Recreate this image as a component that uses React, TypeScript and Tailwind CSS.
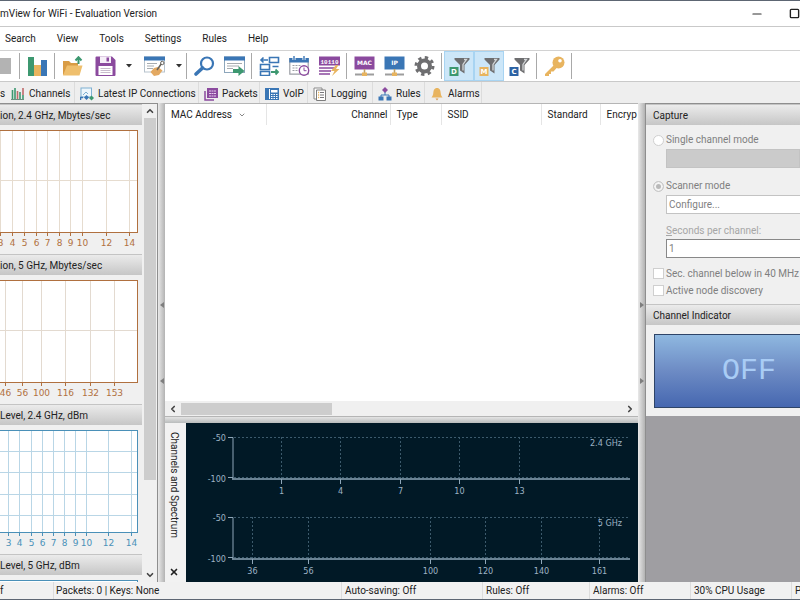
import React from 'react';
import clsx from 'clsx';
import { ChevronUp, ChevronDown, ChevronLeft, ChevronRight, Minus, Square, X } from 'lucide-react';

const BLUE = '#3a76b5';
const PURPLE = '#8b4a9e';
const GREEN = '#3d9870';
const SAND = '#e8b45f';
const GRAY = '#6e6e70';

/* ---------- toolbar icons ---------- */

const Icon: React.FC<{ children: React.ReactNode }> = ({ children }) => (
  <svg width="21" height="20" viewBox="0 0 21 20" fill="none" className="shrink-0">
    {children}
  </svg>
);

const BarsIcon = () => (
  <Icon>
    <rect x="1" y="1" width="6" height="19" fill={GREEN} />
    <rect x="7" y="9" width="7" height="11" fill={SAND} />
    <rect x="14" y="4" width="6" height="16" fill={BLUE} />
  </Icon>
);

const OpenIcon = () => (
  <Icon>
    <path d="M1 19V5h6l2 2h7v3" fill="#d99c45" />
    <path d="M1 19.500 5 9.500h15.500L17.500 19.500z" fill="#efbf6d" />
    <path d="M16.500 8V2M13.500 4.500l3-3.300 3 3.300" stroke={GREEN} strokeWidth="2" />
  </Icon>
);

const SaveIcon = () => (
  <Icon>
    <path d="M.5 1.500A1 1 0 0 1 1.500.5H17l3.500 3.500v15a1 1 0 0 1-1 1h-18a1 1 0 0 1-1-1z" fill={PURPLE} />
    <rect x="5" y=".5" width="11" height="6.500" fill="#f6eff8" />
    <rect x="11.500" y="1.500" width="2.500" height="4" fill={PURPLE} />
    <rect x="3.500" y="10" width="14" height="9" fill="#fff" />
    <path d="M5.500 12.500h10M5.500 14.500h10M5.500 16.500h10" stroke="#c9bccd" />
  </Icon>
);

const ProfileIcon = () => (
  <Icon>
    <rect x=".5" y="1" width="20" height="15" fill="#fff" stroke="#b7c3cd" />
    <rect width="21" height="4" y=".5" fill={BLUE} />
    <path d="M3 7.500h10M3 10h7M3 12.500h6" stroke="#a7acb0" />
    <path d="m6.500 16 3.500-4 4-1 4.500 3.500-3.500 4.500-5 1z" fill="#e3a962" />
    <path d="m13 14 4.500-6.500" stroke="#66625c" strokeWidth="1.500" />
    <circle cx="18.300" cy="7" r="1.700" fill="#fff" stroke="#66625c" />
  </Icon>
);

const FindIcon = () => (
  <Icon>
    <circle cx="13" cy="7.500" r="6" stroke={BLUE} strokeWidth="2.200" />
    <path d="m8.500 12-6.500 6" stroke={BLUE} strokeWidth="3.600" strokeLinecap="round" />
  </Icon>
);

const GotoIcon = () => (
  <Icon>
    <rect x=".5" y="1" width="20" height="15.500" fill="#fff" stroke="#8da6bb" />
    <rect y=".5" width="21" height="4" fill={BLUE} />
    <path d="M3 7.500h15M3 10h12M3 12.500h6" stroke="#a7acb0" />
    <path d="M9 13h5.500v-3l6 5-6 5v-3H9z" fill={GREEN} />
  </Icon>
);

const ReconstructIcon = () => (
  <Icon>
    <path d="M10.500 1.500h9v5h-9zM1.500 8.500h9v5h-9zM1.500 15.500h9v4h-9z" stroke={BLUE} strokeWidth="1.600" />
    <path d="M9 4H2M4.500 1.500 2 4l2.500 2.500M13.500 10.500h6" stroke={BLUE} strokeWidth="1.600" />
    <path d="M12 16h7M16.500 13.500 19 16l-2.500 2.500" stroke={GREEN} strokeWidth="1.800" />
  </Icon>
);

const ScheduleIcon = () => (
  <Icon>
    <path d="M.8 2.500h18.400v15.700H.8z" fill="#fff" stroke="#9b9ea5" strokeWidth="1.200" />
    <rect x=".3" y="2" width="19.500" height="4.500" fill={BLUE} />
    <path d="M5 0v4M15 0v4" stroke="#fff" strokeWidth="3" />
    <path d="M5 0v4M15 0v4" stroke={BLUE} strokeWidth="1.400" />
    <path d="M3.500 9.500h9M3.500 12h6M3.500 14.500h6" stroke="#9b9ea5" strokeDasharray="2 1" />
    <circle cx="15" cy="14.500" r="4.700" fill="#fff" stroke={PURPLE} strokeWidth="1.400" />
    <path d="M15 11.500v3.200h2.500" stroke={PURPLE} />
  </Icon>
);

const BinaryIcon = () => (
  <Icon>
    <rect y=".5" width="21" height="9" fill={PURPLE} />
    <text x="10.500" y="7.500" textAnchor="middle" fill="#fff" className="font-['Liberation_Mono'] text-[6px] font-bold">
      10110
    </text>
    <path d="M0 12h17M0 15h12M0 18h11" stroke={PURPLE} strokeWidth="1.600" />
    <path d="m17 9-5 6h3.500L13 20l7.500-7H17l2.500-4z" fill={SAND} />
  </Icon>
);

const AddressIcon: React.FC<{ label: string; color: string }> = ({ label, color }) => (
  <Icon>
    <rect x=".5" y=".5" width="20" height="13" fill={color} />
    <text x="10.500" y="9" textAnchor="middle" fill="#fff" className="font-['DejaVu_Sans'] text-[6px] font-bold">
      {label}
    </text>
    <path d="M1 18.500h19" stroke="#9d9d9d" strokeWidth="2" />
    <path d="M10.500 13v4" stroke="#c0a266" strokeWidth="1.600" />
    <rect x="8" y="16.500" width="5" height="3.500" fill={SAND} />
  </Icon>
);

const GearIcon = () => (
  <Icon>
    <circle cx="10.500" cy="10" r="5.500" stroke={GRAY} strokeWidth="4" />
    <circle cx="10.500" cy="10" r="8.500" stroke={GRAY} strokeWidth="3" strokeDasharray="3.340 3.340" />
  </Icon>
);

const FilterIcon: React.FC<{ letter: string; color: string }> = ({ letter, color }) => (
  <Icon>
    <path d="M5.500 2h15v1.500L15.500 9v8.500l-4.500-3V9L5.500 3.500z" fill={GRAY} />
    <path d="M15 3.500h2.500L14 8.500v6" stroke="#d4d7d9" strokeWidth="1.300" />
    <rect x=".5" y="11" width="9" height="9" fill={color} />
    <text x="5" y="18" textAnchor="middle" fill="#fff" className="font-['DejaVu_Sans'] text-[7px] font-bold">
      {letter}
    </text>
  </Icon>
);

const KeyIcon = () => (
  <Icon>
    <circle cx="14.500" cy="6.500" r="6" fill={SAND} />
    <path d="m11 8-10 10v2h4v-2h2v-2.500h2.500L13.500 11z" fill={SAND} />
    <circle cx="16" cy="4.800" r="1.800" fill="#fff" />
  </Icon>
);

/* ---------- tab icons ---------- */

const SmallIcon: React.FC<{ children: React.ReactNode }> = ({ children }) => (
  <svg width="14" height="14" viewBox="0 0 14 14" fill="none" className="shrink-0">
    {children}
  </svg>
);

const ChannelsIcon = () => (
  <SmallIcon>
    <path d="M1.500 3v9M4 1v11M9 5v7" stroke={GREEN} strokeWidth="1.600" />
    <path d="M6.500 4v8M12 1v7" stroke="#c06b6b" strokeWidth="1.600" />
    <path d="M12 8v4" stroke={GREEN} strokeWidth="1.600" />
    <path d="M0 12.500h13" stroke="#6c8f80" />
  </SmallIcon>
);

const ConnectionsIcon = () => (
  <SmallIcon>
    <rect x="1" y="1" width="10.500" height="9" fill="#eef6fb" stroke="#7fb0d2" />
    <path d="M.5 10V13M0 10.500h3" stroke={BLUE} strokeWidth="1.500" />
    <path d="m3 8 3-3 2 2" stroke="#7fb0d2" />
    <path d="m6.500 8 2.500 2.500L6.500 13 4 10.500z" fill={BLUE} />
    <path d="m11.500 8.500 2.500 2.500-2.500 2.500L9 11z" fill={GREEN} />
  </SmallIcon>
);

const PacketsIcon = () => (
  <SmallIcon>
    <path d="M1 4v9h9" stroke={PURPLE} strokeWidth="1.500" />
    <rect x="3" y="1" width="11" height="10" fill={PURPLE} />
    <path d="M5 4h7M5 6.500h7M5 9h7" stroke="#e7cdee" strokeDasharray="2 .5" />
  </SmallIcon>
);

const PhoneIcon = () => (
  <SmallIcon>
    <rect y="1" width="14" height="12" fill={BLUE} />
    <path d="M4.500 2v10" stroke="#fff" />
    <rect x="6" y="3" width="6.500" height="2.500" fill="#fff" />
    <path d="M6 7.500h7M6 9.500h7M6 11.500h7" stroke="#fff" strokeDasharray="1.500 1" />
  </SmallIcon>
);

const LogIcon = () => (
  <SmallIcon>
    <path d="M1 1h8v11H1z" fill="#fff" stroke="#8a8a8a" />
    <path d="M3.500 3h9v10.500h-9z" fill="#fff" stroke="#7d7d7d" />
    <path d="M7 5.500h4M7 8h4M7 10.500h4" stroke="#77767a" />
    <path d="M5 5.500h1.200M5 8h1.200M5 10.500h1.200" stroke={SAND} strokeWidth="1.300" />
  </SmallIcon>
);

const RulesIcon = () => (
  <SmallIcon>
    <path d="m7 0 3 3-3 3-3-3z" fill={PURPLE} />
    <path d="M7 5v3M3 10V8h8v2" stroke={BLUE} />
    <rect x=".5" y="9.500" width="5" height="4" fill={BLUE} />
    <rect x="8.500" y="9.500" width="5" height="4" fill={BLUE} />
  </SmallIcon>
);

const BellIcon = () => (
  <SmallIcon>
    <path d="M7 1c2.800 0 3.500 2.500 3.700 5 .1 2 .8 3 1.800 4.500h-11C2.500 9 3.200 8 3.300 6 3.500 3.500 4.200 1 7 1z" fill={SAND} />
    <path d="M5.500 11.500h3L7 13.500z" fill="#dd9c4e" />
  </SmallIcon>
);

const MENU = ['Search', 'View', 'Tools', 'Settings', 'Rules', 'Help'];

const TABS = [
  { label: 'Channels', icon: <ChannelsIcon />, width: 'w-[69px]' },
  { label: 'Latest IP Connections', icon: <ConnectionsIcon />, width: 'w-[124px]' },
  { label: 'Packets', icon: <PacketsIcon />, width: 'w-[61px]' },
  { label: 'VoIP', icon: <PhoneIcon />, width: 'w-[48px]' },
  { label: 'Logging', icon: <LogIcon />, width: 'w-[65px]' },
  { label: 'Rules', icon: <RulesIcon />, width: 'w-[52px]' },
  { label: 'Alarms', icon: <BellIcon />, width: 'w-[57px]' },
];

const Separator = () => (
  <div className="flex w-[5px] shrink-0 justify-center py-[2px]">
    <div className="w-px bg-[#a9a9a9]" />
  </div>
);

interface ToolButtonProps {
  title: string;
  className?: string;
  pressed?: boolean;
  children: React.ReactNode;
}

const ToolButton: React.FC<ToolButtonProps> = ({ title, className = 'w-[30px]', pressed, children }) => (
  <button
    title={title}
    aria-pressed={pressed}
    className={clsx(
      'flex h-full shrink-0 items-center justify-center',
      className,
      pressed && 'border border-[#a8d4f2] bg-[#cce6f8]',
    )}
  >
    {children}
  </button>
);

const Caret = () => (
  <svg width="6" height="4" viewBox="0 0 6 4">
    <path d="M0 0h6L3 3.500z" fill="#333" />
  </svg>
);

const Toolbar = () => (
  <div className="flex h-[31px] shrink-0 items-stretch overflow-hidden border-b border-[#c9c9c9] bg-white">
    <ToolButton title="Stop capture" className="w-[17px]">
      <div className="mr-auto h-[16px] w-[11px] bg-[#b3b3b3]" />
    </ToolButton>
    <Separator />
    <ToolButton title="Statistics"><BarsIcon /></ToolButton>
    <Separator />
    <ToolButton title="Open"><OpenIcon /></ToolButton>
    <ToolButton title="Save" className="w-[36px]"><SaveIcon /></ToolButton>
    <ToolButton title="Save options" className="w-[12px]"><Caret /></ToolButton>
    <ToolButton title="Log view" className="w-[38px]"><ProfileIcon /></ToolButton>
    <ToolButton title="Log options" className="w-[11px]"><Caret /></ToolButton>
    <Separator />
    <ToolButton title="Find"><FindIcon /></ToolButton>
    <ToolButton title="Go to packet"><GotoIcon /></ToolButton>
    <Separator />
    <ToolButton title="Reconnect"><ReconstructIcon /></ToolButton>
    <ToolButton title="Scheduler"><ScheduleIcon /></ToolButton>
    <ToolButton title="Packet generator"><BinaryIcon /></ToolButton>
    <Separator />
    <ToolButton title="MAC aliases"><AddressIcon label="MAC" color={PURPLE} /></ToolButton>
    <ToolButton title="IP aliases"><AddressIcon label="IP" color={BLUE} /></ToolButton>
    <ToolButton title="Options"><GearIcon /></ToolButton>
    <Separator />
    <ToolButton title="Data packets" pressed><FilterIcon letter="D" color={GREEN} /></ToolButton>
    <ToolButton title="Management packets" pressed><FilterIcon letter="M" color={SAND} /></ToolButton>
    <ToolButton title="Control packets"><FilterIcon letter="C" color="#2c63a5" /></ToolButton>
    <Separator />
    <ToolButton title="Keys"><KeyIcon /></ToolButton>
    <Separator />
  </div>
);

/* ---------- left column charts ---------- */

interface ChartProps {
  title: string;
  ticks: [string, number][];
  rows: number[];
  color: string;
  grid: string;
}

const PanelHeader: React.FC<{ children: React.ReactNode; className?: string }> = ({ children, className }) => (
  <h2
    className={clsx(
      'flex h-[21px] shrink-0 items-center overflow-hidden border-t border-[#c4c4c4] bg-linear-to-b from-[#ebebeb] to-[#c6c6c6] pt-px whitespace-nowrap',
      className,
    )}
  >
    {children}
  </h2>
);

const Chart: React.FC<ChartProps> = ({ title, ticks, rows, color, grid }) => (
  <section className="shrink-0">
    <PanelHeader>{title}</PanelHeader>
    <svg className="block h-[129px] w-full">
      <rect x="-5" y="5.500" width="142.500" height="102" fill="#fff" />
      {rows.map((y) => (
        <line key={y} x1="0" x2="137" y1={y} y2={y} stroke={grid} />
      ))}
      {ticks.map(([label, x]) => (
        <g key={label}>
          <line x1={x} x2={x} y1="6" y2="107" stroke={grid} />
          <line x1={x} x2={x} y1="108" y2="111" stroke={color} />
          <text x={x} y="121" textAnchor="middle" fill={color} className="font-['DejaVu_Sans'] text-[9px]">
            {label}
          </text>
        </g>
      ))}
      <rect x="-5" y="5.500" width="142.500" height="102" fill="none" stroke={color} />
    </svg>
  </section>
);

const TICKS_24: [string, number][] = [
  ['3', 0.5], ['4', 12.5], ['5', 24.5], ['6', 36.5], ['7', 47.5],
  ['8', 59.5], ['9', 70.5], ['10', 82.5], ['12', 106.5], ['14', 129.5],
];

const TICKS_5: [string, number][] = [
  ['46', 5.5], ['56', 22.5], ['100', 41.5], ['116', 65.5], ['132', 90.5], ['153', 114.5],
];

const TICKS_LEVEL: [string, number][] = [
  ['3', 8.5], ['4', 19.5], ['5', 31.5], ['6', 42.5], ['7', 53.5],
  ['8', 64.5], ['9', 75.5], ['10', 86.5], ['12', 108.5], ['14', 131.5],
];

const LEVEL_ROWS = [26.5, 47.5, 69.5, 90.5];

const LeftPanel = () => (
  <aside className="flex w-[158px] shrink-0 border-t border-r border-[#8e8e8e] bg-[#f0f0f0]">
    <div className="flex min-w-0 flex-1 flex-col overflow-hidden">
      <Chart title="ion, 2.4 GHz, Mbytes/sec" ticks={TICKS_24} rows={[55.5]} color="#b0703f" grid="#e6dccf" />
      <Chart title="ion, 5 GHz, Mbytes/sec" ticks={TICKS_5} rows={[55.5]} color="#b0703f" grid="#e3dad0" />
      <Chart title="Level, 2.4 GHz, dBm" ticks={TICKS_LEVEL} rows={LEVEL_ROWS} color="#4a90b8" grid="#b9d6e6" />
      <Chart title="Level, 5 GHz, dBm" ticks={[]} rows={LEVEL_ROWS} color="#4a90b8" grid="#b9d6e6" />
    </div>
    <div className="ml-px flex w-[14px] flex-col items-center bg-[#f0f0f0]">
      <ChevronUp className="my-[2px] h-[10px] w-[10px] text-[#444]" strokeWidth={4} />
      <div className="w-[12px] flex-[362_1_0%] bg-[#cdcdcd]" />
      <div className="flex-[88_1_0%]" />
      <ChevronDown className="my-[2px] h-[10px] w-[10px] text-[#444]" strokeWidth={4} />
    </div>
  </aside>
);

/* ---------- splitters ---------- */

const SplitterV: React.FC<{ direction: 'left' | 'right' }> = ({ direction }) => (
  <div className="flex w-[7px] shrink-0 flex-col items-center justify-center gap-[70px] bg-linear-to-r from-[#e9e9e9] to-[#b3b3b3]">
    {[0, 1].map((i) => (
      <svg key={i} width="4" height="6" viewBox="0 0 4 6">
        <path d={direction === 'left' ? 'M4 0v6L0 3z' : 'M0 0v6l4-3z'} fill="#7e7e7e" />
      </svg>
    ))}
  </div>
);

/* ---------- node list ---------- */

const COLUMNS = [
  { label: 'MAC Address', width: 'w-[101px]' },
  { label: 'Channel', width: 'w-[124px]' },
  { label: 'Type', width: 'w-[51px]' },
  { label: 'SSID', width: 'w-[100px]' },
  { label: 'Standard', width: 'w-[59px]' },
  { label: 'Encryp', width: 'w-auto' },
];

const NodeList = () => (
  <div className="flex min-h-0 flex-1 flex-col border-t border-b border-[#b5b5b5] bg-white">
    <div className="min-h-0 flex-1 overflow-hidden">
      <table className="w-full table-fixed border-collapse">
        <thead>
          <tr className="h-[21px]">
            {COLUMNS.map(({ label, width }) => (
              <th
                key={label}
                scope="col"
                className={clsx(
                  'border-r border-[#e5e5e5] pt-px pl-[6px] font-normal whitespace-nowrap last:border-r-0',
                  width,
                  label === 'Channel' ? 'pr-[2px] text-right' : 'text-left',
                )}
              >
                {label}
                {label === 'MAC Address' && (
                  <ChevronDown className="ml-[6px] inline h-[8px] w-[8px] text-[#888]" strokeWidth={3} />
                )}
              </th>
            ))}
          </tr>
        </thead>
      </table>
    </div>
    <div className="flex h-[15px] shrink-0 items-center bg-[#f0f0f0]">
      <ChevronLeft className="mx-[3px] h-[10px] w-[10px] text-[#444]" strokeWidth={4} />
      <div className="h-[12px] w-[32%] bg-[#cdcdcd]" />
      <ChevronRight className="mr-[3px] ml-auto h-[10px] w-[10px] text-[#444]" strokeWidth={4} />
    </div>
  </div>
);

/* ---------- spectrum ---------- */

interface BandProps {
  top: number;
  name: string;
  ticks: [string, number][];
}

const Band: React.FC<BandProps> = ({ top, name, ticks }) => (
  <g transform={`translate(0 ${top})`} stroke="#8ea6b8" fill="#9db2c4">
    <path d="M42 .5h5v41M42 40.500h5" fill="none" />
    <line x1="46" x2="444" y1="42" y2="42" strokeWidth="1.500" />
    <path d="M48 .5h396M48 40.500h396" stroke="#3c5a6c" strokeDasharray="2 2" fill="none" />
    {ticks.map(([label, x]) => (
      <g key={label}>
        <line x1={x} x2={x} y1="0" y2="41" stroke="#3c5a6c" strokeDasharray="2 2" />
        <line x1={x} x2={x} y1="42" y2="47" />
        <text x={x} y="57" textAnchor="middle" stroke="none">{label}</text>
      </g>
    ))}
    <g stroke="none" textAnchor="end">
      <text x="40" y="4">-50</text>
      <text x="40" y="45">-100</text>
      <text x="436" y="9">{name}</text>
    </g>
  </g>
);

const Spectrum = () => (
  <div className="flex h-[159px] shrink-0">
    <div className="flex w-[21px] shrink-0 flex-col items-center justify-between bg-[#f2f2f2] pt-[9px] pr-[3px] pb-[5px]">
      <span className="leading-[14px] whitespace-nowrap [writing-mode:vertical-rl]">
        Channels and Spectrum
      </span>
      <button title="Close">
        <X className="h-[10px] w-[10px] text-[#222]" strokeWidth={4} />
      </button>
    </div>
    <svg className="block h-full min-w-0 flex-1 bg-[#011926] font-['DejaVu_Sans_Condensed','DejaVu_Sans'] text-[9px]">
      <Band top={14} name="2.4 GHz" ticks={[['1', 95.5], ['4', 154.5], ['7', 214.5], ['10', 273.5], ['13', 333.5]]} />
      <Band
        top={94}
        name="5 GHz"
        ticks={[['36', 66.5], ['56', 122.5], ['100', 244.5], ['120', 299.5], ['140', 355.5], ['161', 413.5]]}
      />
    </svg>
  </div>
);

/* ---------- right column ---------- */

const CapturePanel = () => (
  <aside className="flex w-[155px] shrink-0 flex-col overflow-hidden border-t border-l border-[#8e8e8e] bg-[#9f9ea2]">
    <PanelHeader className="pl-[7px]">Capture</PanelHeader>
    <form className="flex flex-col bg-[#f0f0f0] pt-[7px] pb-[5px] pl-[7px] whitespace-nowrap text-[#7f7f7f]">
      <label className="flex h-[16px] items-center gap-[2px]">
        <input
          type="radio"
          name="mode"
          disabled
          className="h-[11px] w-[11px] appearance-none rounded-full border border-[#cfcfcf] bg-white"
        />
        Single channel mode
      </label>
      <select
        aria-label="Channel"
        disabled
        className="mt-px ml-[13px] h-[19px] appearance-none border border-[#c3c3c3] bg-[#cbcbcb]"
      />
      <label className="mt-[10px] flex h-[16px] items-center gap-[2px]">
        <input
          type="radio"
          name="mode"
          disabled
          defaultChecked
          className="h-[11px] w-[11px] appearance-none rounded-full border border-[#c9c9c9] bg-white checked:bg-[#b9b9b9] checked:shadow-[inset_0_0_0_2px_#f4f4f4]"
        />
        Scanner mode
      </label>
      <button
        type="button"
        disabled
        className="mt-px ml-[13px] h-[19px] border border-r-0 border-[#c3c3c3] bg-white pl-[2px] text-left"
      >
        Configure...
      </button>
      <label htmlFor="seconds" className="mt-[10px] ml-[13px] h-[14px] text-[#a6a6a6]">
        <span className="underline">S</span>econds per channel:
      </label>
      <input
        id="seconds"
        type="text"
        disabled
        defaultValue="1"
        className="mt-px ml-[13px] h-[19px] min-w-0 border border-r-0 border-[#888] bg-white px-[2px]"
      />
      <label className="mt-[7px] flex h-[17px] items-center gap-[2px]">
        <input type="checkbox" disabled className="h-[11px] w-[11px] shrink-0 appearance-none border border-[#cfcfcf] bg-white" />
        Sec. channel below in 40 MHz
      </label>
      <label className="flex h-[17px] items-center gap-[2px]">
        <input type="checkbox" disabled className="h-[11px] w-[11px] shrink-0 appearance-none border border-[#cfcfcf] bg-white" />
        Active node discovery
      </label>
    </form>
    <PanelHeader className="pl-[7px]">Channel Indicator</PanelHeader>
    <div className="bg-[#f0f0f0] pt-[9px] pb-[8px] pl-[8px]">
      <div className="flex h-[74px] items-center border border-r-0 border-[#2e4468] bg-linear-to-b from-[#8fb8e0] via-[#6d8bc4] to-[#4667b0] pl-[67px]">
        <output className="font-['Liberation_Mono',monospace] text-[30px] leading-none text-[#a9ccf5]">OFF</output>
      </div>
    </div>
  </aside>
);

const STATUS = [
  { text: 'f', width: 'w-[54px]' },
  { text: 'Packets: 0 | Keys: None', width: 'w-[288px] pl-[2px]' },
  { text: 'Auto-saving: Off', width: 'w-[141px] pl-[3px]' },
  { text: 'Rules: Off', width: 'w-[107px] pl-[3px]' },
  { text: 'Alarms: Off', width: 'w-[101px] pl-[3px]' },
  { text: '30% CPU Usage', width: 'w-[101px] pl-[3px]' },
  { text: 'P', width: 'flex-1 pl-[3px]' },
];

const App: React.FC = () => (
  <div className="flex h-screen flex-col overflow-hidden border-t border-b border-[#5d6673] bg-[#f0f0f0] font-['Roboto','Open_Sans',sans-serif] text-[10px] leading-[14px] text-[#222]">
    <header className="flex h-[26px] shrink-0 items-center justify-between border-b border-[#c9c9c9] bg-white">
      <h1>mView for WiFi - Evaluation Version</h1>
      <div className="flex items-center gap-[25px] overflow-hidden">
        <button title="Minimize"><Minus className="h-[14px] w-[14px] text-[#333]" strokeWidth={2} /></button>
        <button title="Maximize"><Square className="h-[11px] w-[11px] text-[#222]" strokeWidth={3} /></button>
      </div>
    </header>
    <nav className="flex h-[24px] shrink-0 items-center gap-[21px] border-b border-[#d2d2d2] bg-white pl-[5px]">
      {MENU.map((item) => (
        <button key={item}>{item}</button>
      ))}
    </nav>
    <Toolbar />
    <div role="tablist" className="flex h-[21px] shrink-0 items-stretch bg-[#eeeeee]">
      <button role="tab" aria-selected className="w-[6px] pt-[2px] text-left">s</button>
      {TABS.map(({ label, icon, width }) => (
        <button
          key={label}
          role="tab"
          aria-selected={false}
          className={clsx('flex shrink-0 items-center gap-1 border-r border-[#dcdcdc] pt-[2px] pl-[5px] whitespace-nowrap', width)}
        >
          {icon}
          {label}
        </button>
      ))}
    </div>
    <main className="flex min-h-0 flex-1">
      <LeftPanel />
      <SplitterV direction="left" />
      <div className="flex min-w-0 flex-1 flex-col">
        <NodeList />
        <div className="h-[6px] shrink-0 bg-linear-to-b from-[#e4e4e4] to-[#b9bcbc]" />
        <Spectrum />
      </div>
      <SplitterV direction="right" />
      <CapturePanel />
    </main>
    <footer className="flex h-[17px] shrink-0 items-center bg-[#f1f1f1]">
      {STATUS.map(({ text, width }) => (
        <span
          key={text}
          className={clsx('h-full shrink-0 overflow-hidden border-r border-[#dcdcdc] leading-[18px] whitespace-nowrap last:border-r-0', width)}
        >
          {text}
        </span>
      ))}
    </footer>
  </div>
);

export default App;
